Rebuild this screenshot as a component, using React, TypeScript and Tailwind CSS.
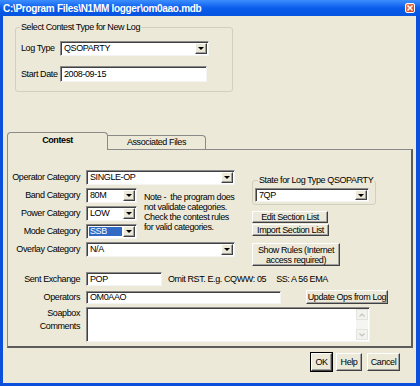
// App.tsx

const field =
  "bg-white border border-t-[#8a8a8a] border-l-[#8a8a8a] border-r-[#f4f4f4] border-b-[#f4f4f4] shadow-[inset_1px_1px_0_#404040]";
const raised =
  "bg-[#ECE9D8] border border-t-white border-l-white border-r-[#404040] border-b-[#404040] shadow-[inset_-1px_-1px_0_#a0a0a0]";

const DropBtn = () => (
  <div className={`${raised} ml-auto mr-[1px] my-[1px] w-[12px] self-stretch flex items-center justify-center`}>
    <span className="border-x-[3px] border-x-transparent border-t-[3px] border-t-black" />
  </div>
);

type SelectProps = { value: string; className: string; hl?: boolean };

const Select = ({ value, className, hl }: SelectProps) => (
  <div className={`${field} flex items-stretch ${className}`}>
    {hl ? (
      <span className="flex-1 flex items-center m-[2px] mr-[1px] pl-[1px] bg-[#316AC5] text-white">{value}</span>
    ) : (
      <span className="flex items-center pl-[3px]">{value}</span>
    )}
    <DropBtn />
  </div>
);

const Input = ({ value, className }: { value: string; className: string }) => (
  <div className={`${field} flex items-center pl-[3px] ${className}`}>{value}</div>
);

const Button = ({ children, className }: { children: React.ReactNode; className: string }) => (
  <div className={`${raised} flex items-center justify-center text-center ${className}`}>{children}</div>
);

const Row = ({ label, children, className = "" }: { label: string; children: React.ReactNode; className?: string }) => (
  <div className={`flex items-center ${className}`}>
    <span className="w-[72px] text-right shrink-0">{label}</span>
    <div className="ml-[6px] flex items-center">{children}</div>
  </div>
);

export default function App() {
  return (
    <div className="w-[420px] h-[386px] bg-[#0B4FDA] flex flex-col font-['Liberation_Sans',Arial,sans-serif] text-[9px] leading-[11px] tracking-[-0.4px] text-black select-none">
      {/* title bar */}
      <div className="h-[16px] shrink-0 flex items-center pl-[3px] pr-[5px] bg-linear-to-b from-[#3C8EFF] via-[#0A5CEB] to-[#0654E0]">
        <span className="text-white font-bold text-[10px] tracking-[-0.3px]">
          {"C:\\Program Files\\N1MM logger\\om0aao.mdb"}
        </span>
        <div className="ml-auto w-[10px] h-[10px] rounded-[2px] border border-white bg-linear-to-br from-[#EE7E5A] to-[#CC3F18] flex items-center justify-center">
          <svg width="6" height="6" viewBox="0 0 6 6">
            <path d="M0.5 0.5 L5.5 5.5 M5.5 0.5 L0.5 5.5" stroke="white" strokeWidth="1.4" />
          </svg>
        </div>
      </div>

      <div className="flex-1 ml-[3px] mr-[4px] mb-[3px] bg-[#ECE9D8] flex flex-col">
        {/* Select Contest Type */}
        <fieldset className="ml-[12px] mt-[6px] w-[218px] h-[70px] border border-[#D0D0BF] rounded-[3px] px-[5px]">
          <legend className="px-[1px] -ml-[1px]">Select Contest Type for New Log</legend>
          <div className="mt-[8px] flex items-center h-[15px]">
            <span className="w-[39px]">Log Type</span>
            <Select value="QSOPARTY" className="w-[149px] h-[15px]" />
          </div>
          <div className="mt-[10px] flex items-center h-[16px]">
            <span className="w-[39px]">Start Date</span>
            <Input value="2008-09-15" className="w-[147px] h-[16px]" />
          </div>
        </fieldset>

        {/* tabs */}
        <div className="mt-[40px] ml-[4px] h-[17px] flex items-end">
          <div className="relative z-10 -mb-[1px] w-[101px] h-[18px] bg-[#ECE9D8] border border-b-0 border-[#8a8a8a] rounded-t-[4px] flex items-center justify-center font-bold pb-[2px]">
            Contest
          </div>
          <div className="w-[98px] h-[14px] border border-b-0 border-l-0 border-[#8a8a8a] rounded-tr-[4px] flex items-center justify-center">
            Associated Files
          </div>
        </div>

        {/* panel */}
        <div className="ml-[4px] w-[406px] h-[199px] border-l border-t border-[#8a8a8a] border-r-[2px] border-b-[2px] border-r-[#5c5c5c] border-b-[#5c5c5c] flex flex-col">
          <div className="flex items-start">
            {/* categories */}
            <div className="w-[244px] pt-[20px] flex flex-col">
              <Row label="Operator Category" className="h-[15px]">
                <Select value="SINGLE-OP" className="w-[149px] h-[15px]" />
              </Row>
              <div className="mt-[3px] flex">
                <div className="flex flex-col gap-[3px]">
                  <Row label="Band Category" className="h-[15px]">
                    <Select value="80M" className="w-[51px] h-[15px]" />
                  </Row>
                  <Row label="Power Category" className="h-[15px]">
                    <Select value="LOW" className="w-[51px] h-[15px]" />
                  </Row>
                  <Row label="Mode Category" className="h-[15px]">
                    <Select value="SSB" className="w-[51px] h-[15px]" hl />
                  </Row>
                </div>
                <div className="ml-[7px] pt-[4px] leading-[10px] whitespace-pre">
                  {"Note -  the program does\nnot validate categories.\nCheck the contest rules\nfor valid categories."}
                </div>
              </div>
              <Row label="Overlay Category" className="mt-[3px] h-[15px]">
                <Select value="N/A" className="w-[149px] h-[15px]" />
              </Row>
            </div>

            {/* state / buttons */}
            <div className="flex flex-col items-start">
              <fieldset className="mt-[25px] w-[120px] h-[30px] border border-[#D0D0BF] rounded-[3px] px-[1px]">
                <legend className="ml-[4px] px-[1px] whitespace-nowrap">State for Log Type QSOPARTY</legend>
                <Select value="7QP" className="mt-[2px] ml-[1px] w-[114px] h-[14px]" />
              </fieldset>
              <Button className="mt-[6px] w-[76px] h-[12px]">Edit Section List</Button>
              <Button className="mt-[1px] w-[77px] h-[12px]">Import Section List</Button>
              <Button className="mt-[7px] w-[88px] h-[23px] leading-[10px]">
                Show Rules (Internet
                <br />
                access required)
              </Button>
            </div>
          </div>

          <Row label="Sent Exchange" className="mt-[6px] h-[14px]">
            <Input value="POP" className="w-[76px] h-[14px]" />
            <span className="ml-[6px]">Omit RST. E.g. CQWW: 05</span>
            <span className="ml-[10px]">SS: A 56 EMA</span>
          </Row>

          <Row label="Operators" className="mt-[4px] h-[14px]">
            <Input value="OM0AAO" className="w-[195px] h-[13px]" />
            <Button className="ml-[25px] w-[82px] h-[14px]">Update Ops from Log</Button>
          </Row>

          <div className="mt-[3px] flex items-start">
            <span className="w-[72px] text-right leading-[13px]">
              Soapbox
              <br />
              Comments
            </span>
            <div className={`${field} ml-[6px] w-[284px] h-[35px] flex justify-end p-[1px]`}>
              <div className="w-[12px] h-full bg-[#F5F5F1] flex flex-col justify-between">
                <div className="h-[11px] border border-[#E4E4DC] bg-[#F2F2EE] flex items-center justify-center">
                  <svg width="6" height="4" viewBox="0 0 6 4">
                    <path d="M0.5 3.5 L3 1 L5.5 3.5" stroke="#C4C4BC" strokeWidth="1.2" fill="none" />
                  </svg>
                </div>
                <div className="h-[11px] border border-[#E4E4DC] bg-[#F2F2EE] flex items-center justify-center">
                  <svg width="6" height="4" viewBox="0 0 6 4">
                    <path d="M0.5 0.5 L3 3 L5.5 0.5" stroke="#C4C4BC" strokeWidth="1.2" fill="none" />
                  </svg>
                </div>
              </div>
            </div>
          </div>
        </div>

        {/* dialog buttons */}
        <div className="mt-[5px] mr-[16px] flex justify-end gap-[4px]">
          <Button className="w-[21px] h-[18px] outline outline-1 outline-black">OK</Button>
          <Button className="w-[26px] h-[18px]">Help</Button>
          <Button className="ml-[1px] w-[33px] h-[18px]">Cancel</Button>
        </div>
      </div>
    </div>
  );
}
